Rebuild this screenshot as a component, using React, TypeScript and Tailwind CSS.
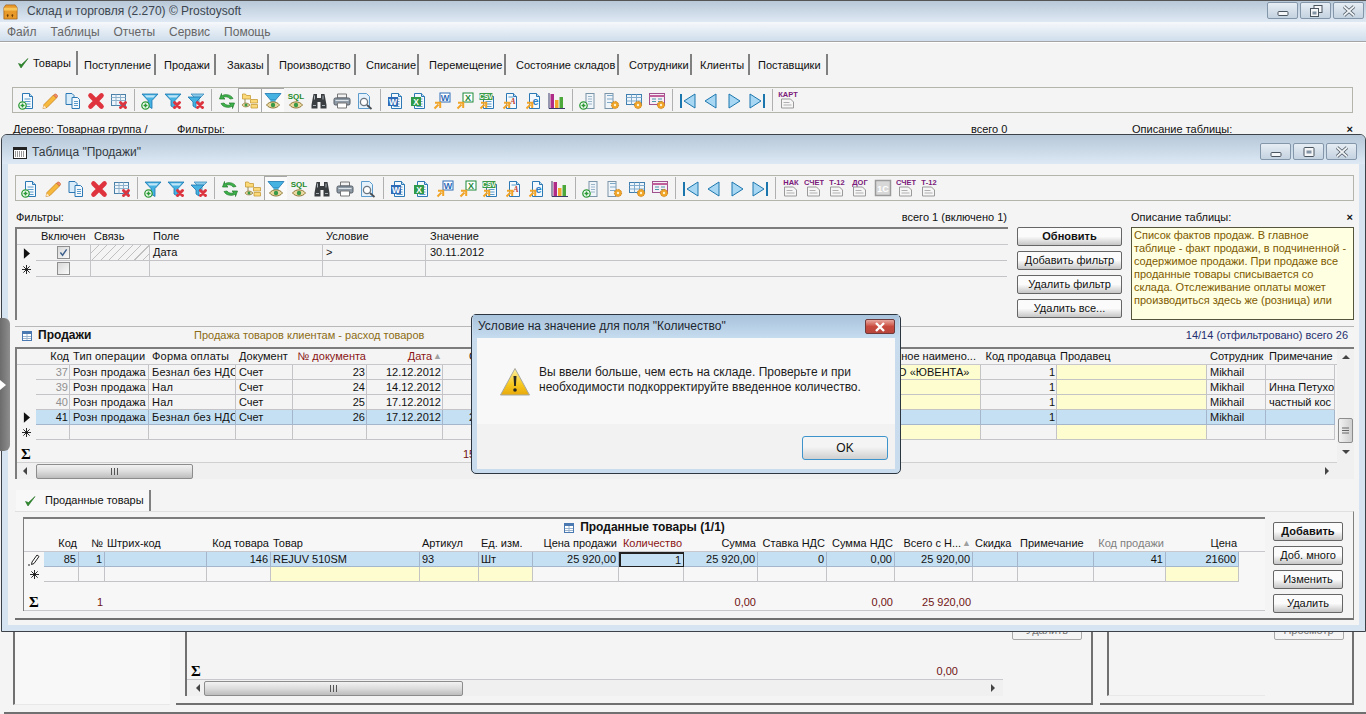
import React from 'react';

// ---- small icon pieces ----
const Ic = ({ children }: { children: React.ReactNode }) => (
	<svg viewBox="0 0 18 18" className="w-[18px] h-[18px]">
		{children}
	</svg>
);

const Doc = ({ lines = true }: { lines?: boolean }) => (
	<>
		<path d="M4.5 1.5h7l3 3v12h-10z" fill="#f4f9fd" stroke="#2c78b4" />
		<path d="M11.5 1.5v3h3" fill="#bcd9ef" stroke="#2c78b4" />
		{lines && <path d="M6.5 7h6M6.5 9.5h6M6.5 12h6M6.5 14.5h6" stroke="#5b9ccc" />}
	</>
);
const Plus = () => (
	<>
		<circle cx="4.5" cy="13.5" r="3.7" fill="#fff" stroke="#2b9a35" strokeWidth="1.3" />
		<path d="M4.5 11.5v4M2.5 13.5h4" stroke="#2b9a35" strokeWidth="1.6" />
	</>
);
const SmallX = () => (
	<path d="M10.5 10.5l5 5M15.5 10.5l-5 5" stroke="#dc3540" strokeWidth="3" strokeLinecap="round" />
);
const Arrow = () => (
	<path d="M1.5 16.5l4-4M2 10.8h5.2V16" fill="none" stroke="#f0a428" strokeWidth="2" />
);
const Gear = () => (
	<>
		<circle cx="13" cy="13" r="3.6" fill="#f0a428" stroke="#c97f12" strokeDasharray="1.4 1" />
		<circle cx="13" cy="13" r="1.2" fill="#fff3d0" />
	</>
);
const Eye = () => (
	<>
		<path d="M2.5 13c3-4.2 10-4.2 13 0-3 4-10 4-13 0z" fill="#ecd9a2" stroke="#8f7a3a" />
		<circle cx="9" cy="13" r="2.2" fill="#3a9a48" />
	</>
);
const Funnel = () => (
	<>
		<path d="M1 2h16l-6 6.5v8l-4-2.5V8.500z" fill="#45b2e2" stroke="#1c76ae" strokeWidth="0.8" />
		<path d="M3.500 3.200h11l-2 2.200h-7z" fill="#bfe5f7" />
	</>
);
const Funnel2 = () => (
	<>
		<path d="M4 2h13l-5 5v4H9V7z" fill="#8ccbea" stroke="#3f8fbd" strokeWidth="0.8" />
		<path d="M1 5h13l-5 5v6l-3-2v-4z" fill="#45b2e2" stroke="#1c76ae" strokeWidth="0.8" />
	</>
);
const WBox = ({ c, t }: { c: string; t: string }) => (
	<>
		<rect x="7" y="1" width="10" height="9" fill="#fff" stroke={c} />
		<text x="12" y="9" textAnchor="middle" fontSize="9" fontWeight="700" fontFamily="Liberation Sans, sans-serif" fill={c}>
			{t}
		</text>
	</>
);
const Bars = () => (
	<path d="M5 3.500h6M5 7h6M5 10.500h6" stroke="#7fa9c9" />
);

const icons: Record<string, React.ReactNode> = {
	newDoc: (<Ic><Doc /><Plus /></Ic>),
	pencil: (
		<Ic>
			<path d="M3 12.500L12.500 3l3 3L6 15.500l-4 1z" fill="#f6b93c" stroke="#c9801e" strokeWidth="0.8" />
			<path d="M12.500 3l3 3 1-1.500c.5-1-1.500-3-2.500-2.500z" fill="#f08a70" stroke="#c9601e" strokeWidth="0.6" />
			<path d="M2 16.500l.8-3.200 2.400 2.400z" fill="#ffe9c8" />
		</Ic>
	),
	copy: (
		<Ic>
			<path d="M2 1.500h6l2 2v9H2z" fill="#d9ecf9" stroke="#2c78b4" />
			<path d="M8 5.500h5.500l2 2v9H8z" fill="#f4f9fd" stroke="#2c78b4" />
			<path d="M10 9.500h4M10 11.500h4M10 13.500h4" stroke="#5b9ccc" />
		</Ic>
	),
	bigX: (
		<Ic>
			<path d="M3.500 3.500l11 11M14.500 3.500l-11 11" stroke="#df343e" strokeWidth="4.600" strokeLinecap="round" />
		</Ic>
	),
	tableX: (
		<Ic>
			<rect x="1.500" y="2.500" width="14" height="11" fill="#eef5fb" stroke="#4a7fa8" />
			<path d="M1.500 5.500h14M1.500 8.500h14M6 2.500v11M10.500 2.500v11" stroke="#8fb2cc" />
			<SmallX />
		</Ic>
	),
	filterPlus: (<Ic><Funnel /><Plus /></Ic>),
	filterX: (<Ic><Funnel /><SmallX /></Ic>),
	filterX2: (<Ic><Funnel2 /><SmallX /></Ic>),
	refresh: (
		<Ic>
			<path d="M15 6.500C13 2.500 7 1.500 3.500 4V1.500l-2 5.500h5.500L5 5.500c3-1.500 5.500-.5 7 1.500z" fill="#3db14a" stroke="#1f7d2b" strokeWidth="0.7" />
			<path d="M3 11.500c2 4 8 5 11.500 2.500v2.500l2-5.500H11l2 1.500c-3 1.500-5.500.5-7-1.500z" fill="#3db14a" stroke="#1f7d2b" strokeWidth="0.7" />
		</Ic>
	),
	tree: (
		<Ic>
			<path d="M1.500 2h3l1 1.500h4V7h-8zM9.500 7.500h7v3.500h-7zM10 12.500h6.500V16H10z" fill="#fbd978" stroke="#c79c38" strokeWidth="0.8" />
			<path d="M4 7v5.500h4" fill="none" stroke="#9a8a50" />
			<path d="M1 13c1.500-2.500 6-2.500 8 0-2 2.500-6.500 2.500-8 0z" fill="#ecd9a2" stroke="#8f7a3a" strokeWidth="0.8" />
			<circle cx="5" cy="13" r="1.500" fill="#3a9a48" />
		</Ic>
	),
	filterEye: (
		<Ic>
			<path d="M1 1.500h16l-5.500 6.500h-5z" fill="#45b2e2" stroke="#1c76ae" strokeWidth="0.8" />
			<path d="M6.500 8h5v3h-5z" fill="#45b2e2" />
			<Eye />
		</Ic>
	),
	sql: (
		<Ic>
			<text x="9" y="7" textAnchor="middle" fontSize="8" fontWeight="700" fontFamily="Liberation Sans, sans-serif" fill="#1e8a2a">
				SQL
			</text>
			<Eye />
		</Ic>
	),
	binoculars: (
		<Ic>
			<path d="M3.500 2h3.500v4h4V2h3.500l2 11v3.500H10.500V10h-3v6.500H1.500V13z" fill="#3a3d40" />
			<path d="M3 13.500h3M12 13.500h3M4.500 3.500v4M13 3.500v4" stroke="#a8b0b8" />
		</Ic>
	),
	printer: (
		<Ic>
			<path d="M4.500 2h9v4h-9z" fill="#f2f2f2" stroke="#777" />
			<rect x="1" y="6" width="16" height="7" rx="1.500" fill="#8e9aa6" stroke="#545c64" />
			<path d="M4.500 11h9v5h-9z" fill="#fff" stroke="#777" />
			<path d="M2.500 8.500h13" stroke="#dce4ea" />
		</Ic>
	),
	preview: (
		<Ic>
			<path d="M2.500 1.500h8l3 3v12h-11z" fill="#e6f2fb" stroke="#5b9ccc" />
			<circle cx="8" cy="10" r="3.600" fill="#fff" stroke="#6b7680" strokeWidth="1.300" />
			<path d="M11 13l4.500 4" stroke="#4a4f55" strokeWidth="1.800" />
		</Ic>
	),
	wordDoc: (<Ic><Doc /><rect x="1" y="5" width="10" height="9" fill="#2f6cb8" /><text x="6" y="12.500" textAnchor="middle" fontSize="8.500" fontWeight="700" fontFamily="Liberation Sans, sans-serif" fill="#fff">W</text></Ic>),
	excelDoc: (<Ic><Doc /><rect x="1" y="5" width="10" height="9" fill="#2e9a4a" /><text x="6" y="12.500" textAnchor="middle" fontSize="8.500" fontWeight="700" fontFamily="Liberation Sans, sans-serif" fill="#fff">X</text></Ic>),
	wordExp: (<Ic><WBox c="#2f6cb8" t="W" /><Arrow /></Ic>),
	excelExp: (<Ic><WBox c="#1f8a3a" t="X" /><Arrow /></Ic>),
	csv: (
		<Ic>
			<Doc />
			<rect x="0.500" y="1" width="13" height="7" fill="#3a9a48" />
			<text x="7" y="7" textAnchor="middle" fontSize="6.500" fontWeight="700" fontFamily="Liberation Sans, sans-serif" fill="#fff">CSV</text>
			<Arrow />
		</Ic>
	),
	rtf: (
		<Ic>
			<Doc lines={false} />
			<text x="11" y="12" textAnchor="middle" fontSize="8" fontStyle="italic" fontWeight="700" fontFamily="Liberation Serif, serif" fill="#c0392b">A</text>
			<path d="M6.500 5h5" stroke="#5b9ccc" />
			<Arrow />
		</Ic>
	),
	ie: (
		<Ic>
			<Doc lines={false} />
			<text x="10.500" y="13" textAnchor="middle" fontSize="11" fontWeight="700" fontFamily="Liberation Sans, sans-serif" fill="#2a80c8">e</text>
			<Arrow />
		</Ic>
	),
	chart: (
		<Ic>
			<path d="M1 1v15.500h16" fill="none" stroke="#3b3b6a" />
			<rect x="2.500" y="2" width="3.500" height="14" fill="#b02a88" />
			<rect x="7" y="8" width="3.500" height="8" fill="#f2a62a" />
			<rect x="11.500" y="5" width="3.500" height="11" fill="#4ca83a" />
		</Ic>
	),
	colAdd: (
		<Ic>
			<rect x="7" y="1.500" width="8" height="15" fill="#f0f5f9" stroke="#7a94a8" />
			<path d="M9 4.500h4M9 7h4M9 9.500h4M9 12h4" stroke="#9ab4c8" />
			<Plus />
		</Ic>
	),
	colGear: (
		<Ic>
			<rect x="3" y="1.500" width="8" height="15" fill="#f0f5f9" stroke="#7a94a8" />
			<Bars />
			<Gear />
		</Ic>
	),
	tableGear: (
		<Ic>
			<rect x="1.500" y="2.500" width="15" height="10" fill="#eef5fb" stroke="#3f7fb0" />
			<path d="M1.500 5.500h15M1.500 9h15M6.500 2.500v10M11.500 2.500v10" stroke="#7faacb" />
			<Gear />
		</Ic>
	),
	colsGear: (
		<Ic>
			<rect x="1.500" y="1.500" width="15" height="11" fill="#f6eef6" stroke="#a0508c" />
			<path d="M1.500 4h15" stroke="#c0609a" strokeWidth="2" />
			<path d="M4 7h4M4 9.500h4M10 7h4M10 9.500h4" stroke="#4a9aa8" />
			<Gear />
		</Ic>
	),
	first: (<Ic><path d="M2 2v14" stroke="#1c76ae" strokeWidth="2" /><path d="M16 2v14L5 9z" fill="#a7d7f2" stroke="#1c76ae" /></Ic>),
	prev: (<Ic><path d="M14 2v14L3 9z" fill="#a7d7f2" stroke="#1c76ae" /></Ic>),
	next: (<Ic><path d="M4 2v14l11-7z" fill="#a7d7f2" stroke="#1c76ae" /></Ic>),
	last: (<Ic><path d="M16 2v14" stroke="#1c76ae" strokeWidth="2" /><path d="M2 2v14l11-7z" fill="#a7d7f2" stroke="#1c76ae" /></Ic>),
	oneC: (
		<Ic>
			<rect x="1.500" y="1.500" width="15" height="15" fill="#d8d8d8" stroke="#9a9a9a" strokeWidth="1.500" />
			<text x="9" y="12.500" textAnchor="middle" fontSize="9" fontWeight="700" fontFamily="Liberation Sans, sans-serif" fill="#fff">1C</text>
		</Ic>
	),
};

const Report = ({ t }: { t: string }) => (
	<svg viewBox="0 0 20 20" className="w-[20px] h-[20px]">
		<text x="10" y="6.500" textAnchor="middle" fontSize="7.500" fontWeight="700" fontFamily="Liberation Sans, sans-serif" fill="#7a1a7a">
			{t}
		</text>
		<path d="M3.500 9h9l3 3v6h-12z" fill="#f6f6f6" stroke="#9a9a9a" />
		<path d="M5.500 12.500h6M5.500 15h8" stroke="#b0b0b0" />
	</svg>
);

const baseIcons: (string | null)[] = [
	'newDoc', 'pencil', 'copy', 'bigX', 'tableX', null,
	'filterPlus', 'filterX', 'filterX2', null,
	'refresh', 'tree', 'filterEye', 'sql', 'binoculars', 'printer', 'preview', null,
	'wordDoc', 'excelDoc', 'wordExp', 'excelExp', 'csv', 'rtf', 'ie', 'chart', null,
	'colAdd', 'colGear', 'tableGear', 'colsGear', null,
	'first', 'prev', 'next', 'last', null,
];

function Toolbar({ pressed, reports, className }: { pressed: string[]; reports: string[]; className: string }) {
	return (
		<div className={`flex items-center h-[26px] pl-[2px] border border-[#b4b4ac] ${className}`}>
			{baseIcons.map((name, i) =>
				name === null ? (
					<div key={i} className="w-[8px] h-[22px] flex justify-center shrink-0">
						<div className="w-px h-full bg-[#b0b0b0]" />
					</div>
				) : (
					<div
						key={i}
						className={`w-[23px] h-[24px] pt-[1px] flex items-center justify-center shrink-0 ${
							pressed.includes(name) ? 'border-t border-l border-[#a8a8a8] bg-[#fafafa]' : ''
						}`}
					>
						{icons[name]}
					</div>
				),
			)}
			{reports.map((r, i) => (
				<div key={i} className="w-[23px] h-[24px] flex items-center justify-center shrink-0">
					{r === '1C' ? icons.oneC : <Report t={r} />}
				</div>
			))}
		</div>
	);
}

// ---- window chrome ----
const WinBtn = ({ kind }: { kind: 'min' | 'restore' | 'max' | 'close' }) => (
	<div className="w-[31px] h-[17px] border border-[#8496aa] rounded-[2px] bg-gradient-to-b from-[#e6edf4] to-[#c4d2e0] flex items-center justify-center">
		<svg viewBox="0 0 16 12" className="w-[16px] h-[12px]">
			{kind === 'min' && <rect x="3" y="6.500" width="10" height="4" rx="1" fill="#f4f6f8" stroke="#4a5560" />}
			{kind === 'max' && (
				<>
					<rect x="3" y="1.500" width="10" height="9" rx="1" fill="#f4f6f8" stroke="#4a5560" />
					<rect x="5.500" y="4.500" width="5" height="3" fill="#8494a4" />
				</>
			)}
			{kind === 'restore' && (
				<>
					<rect x="6" y="0.500" width="8" height="7" fill="#f4f6f8" stroke="#4a5560" />
					<rect x="2.500" y="3.500" width="8" height="8" fill="#f4f6f8" stroke="#4a5560" />
					<rect x="4.500" y="6.500" width="4" height="3" fill="#8494a4" />
				</>
			)}
			{kind === 'close' && (
				<>
					<path d="M3 1.500l10 9M13 1.500l-10 9" stroke="#4a5560" strokeWidth="3.400" />
					<path d="M3 1.500l10 9M13 1.500l-10 9" stroke="#eef2f5" strokeWidth="1.800" />
				</>
			)}
		</svg>
	</div>
);

const Check = () => (
	<svg viewBox="0 0 12 12" className="w-[12px] h-[12px]">
		<path d="M1.500 6.500L4 11 11 1.500 4.500 7.500z" fill="#2f8a2f" stroke="#1f6f1f" strokeWidth="0.6" />
	</svg>
);

const TableIcon = () => (
	<svg viewBox="0 0 10 10" className="w-[10px] h-[10px]">
		<rect x="0.500" y="0.500" width="9" height="9" fill="#fff" stroke="#4a78b0" />
		<rect x="0.500" y="0.500" width="9" height="2.500" fill="#4a78b0" />
		<path d="M1 5.500h8M1 7.500h8M5 3v6" stroke="#9ab4d0" />
	</svg>
);

function Btn({ t, bold, className = '' }: { t: string; bold?: boolean; className?: string }) {
	return (
		<div
			className={`flex items-center justify-center h-[19px] border border-[#666] rounded-[2px] bg-gradient-to-b from-[#fbfbfb] from-50% to-[#c6c6c6] text-[#111] ${
				bold ? 'font-bold border-[#444]' : ''
			} ${className}`}
		>
			{t}
		</div>
	);
}

// ---- grids ----
const RowMark = ({ kind }: { kind: string }) => {
	if (kind === 'cur')
		return (
			<svg viewBox="0 0 8 12" className="w-[7px] h-[11px]">
				<path d="M1 0v12l7-6z" fill="#111" />
			</svg>
		);
	if (kind === 'new')
		return (
			<svg viewBox="0 0 10 10" className="w-[9px] h-[9px]">
				<path d="M5 0v10M0 5h10M1.500 1.500l7 7M8.500 1.500l-7 7" stroke="#111" strokeWidth="1" />
			</svg>
		);
	if (kind === 'edit')
		return (
			<svg viewBox="0 0 12 12" className="w-[12px] h-[12px]">
				<path d="M4 8l5-7 2 1.500-5 7-2.500 1z" fill="#fff" stroke="#222" />
				<path d="M0 11h2" stroke="#222" />
			</svg>
		);
	if (kind === 'sum') return <span className="font-['Liberation_Serif'] font-bold text-[15px] leading-none">Σ</span>;
	return null;
};

type Col = { w: string; t?: string; r?: boolean; hc?: string; y?: boolean; pl?: string; g?: boolean; sort?: boolean };
type Row = { mark?: string; sel?: boolean; cells: string[]; focus?: number };

function GridHead({ cols, ind, pad = 'px-[2px]' }: { cols: Col[]; ind: string; pad?: string }) {
	return (
		<div className="flex h-[16px] border-b border-[#c8c8cc] shrink-0">
			<div className={`${ind} shrink-0`} />
			{cols.map((c, i) => (
				<div key={i} className={`${c.w} shrink-0 flex items-center ${pad} whitespace-nowrap overflow-hidden ${c.r ? 'justify-end' : ''} ${c.pl ?? ''} ${c.hc ?? ''}`}>
					{c.t}
					{c.sort && <span className="text-[#a0a0a0] text-[9px] ml-[1px]">▲</span>}
				</div>
			))}
		</div>
	);
}

function GridRows({ cols, rows, ind, pad = 'px-[2px]' }: { cols: Col[]; rows: Row[]; ind: string; pad?: string }) {
	return (
		<>
			{rows.map((row, ri) => (
				<div key={ri} className="flex h-[15px] shrink-0">
					<div className={`${ind} shrink-0 flex items-center justify-center`}>
						{row.mark && <RowMark kind={row.mark} />}
					</div>
					{cols.map((c, i) => (
						<div
							key={i}
							className={`${c.w} shrink-0 flex items-center ${pad} whitespace-nowrap overflow-hidden border-b border-r ${c.r ? 'justify-end' : ''} ${c.pl ?? ''} ${
								row.focus === i
									? 'border-2 border-[#222] bg-[#c6e0f3]'
									: row.sel
										? 'bg-[#c6e0f3] border-[#a4b6cc]'
										: c.y
											? 'bg-[#fdfdd0] border-[#c4c4c4]'
											: 'border-[#c4c4c8]'
							} ${c.g && !row.sel ? 'text-[#909090]' : ''}`}
						>
							{row.cells[i]}
						</div>
					))}
				</div>
			))}
		</>
	);
}

const Grip = () => (
	<svg viewBox="0 0 9 7" className="w-[9px] h-[7px]">
		<path d="M1.500 0v7M4.500 0v7M7.500 0v7" stroke="#555" />
	</svg>
);
const ScrollArrow = ({ dir }: { dir: 'l' | 'r' | 'u' | 'd' }) => (
	<svg viewBox="0 0 8 8" className="w-[8px] h-[8px]">
		{dir === 'l' && <path d="M6 0v8L2 4z" fill="#444" />}
		{dir === 'r' && <path d="M2 0v8l4-4z" fill="#444" />}
		{dir === 'u' && <path d="M0 6h8L4 2z" fill="#444" />}
		{dir === 'd' && <path d="M0 2h8L4 6z" fill="#444" />}
	</svg>
);

const thumbH = 'flex items-center justify-center h-[15px] border border-[#8c8c8c] rounded-[2px] bg-gradient-to-b from-[#f2f2f2] via-[#dcdcdc] to-[#bdbdbd]';

function HScroll({ pad, thumb, lead, arrowRight }: { pad: string; thumb: string; lead: string; arrowRight: string }) {
	return (
		<div className={`flex items-center h-[16px] shrink-0 bg-[#f0f0f0] ${pad}`}>
			<div className={`${lead} flex justify-center shrink-0`}>
				<ScrollArrow dir="l" />
			</div>
			<div className={`${thumb} ${thumbH} shrink-0`}>
				<Grip />
			</div>
			<div className="flex-1" />
			<div className={`${arrowRight} flex justify-center shrink-0`}>
				<ScrollArrow dir="r" />
			</div>
		</div>
	);
}

// ---- data ----
const filterCols: Col[] = [
	{ w: 'w-[55px]', t: 'Включен', pl: 'pl-[5px]' },
	{ w: 'w-[59px]', t: 'Связь', pl: 'pl-[3px]' },
	{ w: 'w-[173px]', t: 'Поле', pl: 'pl-[3px]' },
	{ w: 'w-[103px]', t: 'Условие', pl: 'pl-[3px]' },
	{ w: 'w-[581px]', t: 'Значение', pl: 'pl-[4px]' },
];

const CheckBox = ({ on }: { on?: boolean }) => (
	<div className="w-[13px] h-[13px] border border-[#8e8f8f] bg-gradient-to-br from-[#d8d8d8] to-[#fafafa] flex items-center justify-center">
		{on && (
			<svg viewBox="0 0 10 10" className="w-[9px] h-[9px]">
				<path d="M1.500 5l2.500 3 4.500-6.500" fill="none" stroke="#3c5f8c" strokeWidth="1.600" />
			</svg>
		)}
	</div>
);

const salesCols: Col[] = [
	{ w: 'w-[34px]', t: 'Код', r: true, g: true },
	{ w: 'w-[79px]', t: 'Тип операции', pl: 'tracking-[0.15px]' },
	{ w: 'w-[87px]', t: 'Форма оплаты', pl: 'tracking-[0.2px]' },
	{ w: 'w-[57px]', t: 'Документ' },
	{ w: 'w-[74px]', t: '№ документа', r: true, hc: 'text-[#8a1414]' },
	{ w: 'w-[76px]', t: 'Дата', r: true, hc: 'text-[#8a1414]', sort: true },
	{ w: 'w-[157px]', t: 'Сумма', pl: 'pl-[26px]' },
	{ w: 'w-[278px]', t: 'Клиент' },
	{ w: 'w-[103px]', t: 'Полное наимено...', y: true },
	{ w: 'w-[76px]', t: 'Код продавца', r: true },
	{ w: 'w-[150px]', t: 'Продавец', y: true },
	{ w: 'w-[59px]', t: 'Сотрудник' },
	{ w: 'w-[69px]', t: 'Примечание' },
];

const salesRows: Row[] = [
	{ cells: ['37', 'Розн продажа', 'Безнал без НДС', 'Счет', '23', '12.12.2012', '', '', 'ООО «ЮВЕНТА»', '1', '', 'Mikhail', ''] },
	{ cells: ['39', 'Розн продажа', 'Нал', 'Счет', '24', '14.12.2012', '', '', '', '1', '', 'Mikhail', 'Инна Петухо'] },
	{ cells: ['40', 'Розн продажа', 'Нал', 'Счет', '25', '17.12.2012', '', '', '', '1', '', 'Mikhail', 'частный кос'] },
	{ mark: 'cur', sel: true, cells: ['41', 'Розн продажа', 'Безнал без НДС', 'Счет', '26', '17.12.2012', '25 920,00', '', '', '1', '', 'Mikhail', ''] },
	{ mark: 'new', cells: ['', '', '', '', '', '', '', '', '', '', '', '', ''] },
];

const soldCols: Col[] = [
	{ w: 'w-[35px]', t: 'Код', r: true },
	{ w: 'w-[26px]', t: '№', r: true },
	{ w: 'w-[102px]', t: 'Штрих-код' },
	{ w: 'w-[64px]', t: 'Код товара', r: true },
	{ w: 'w-[149px]', t: 'Товар', y: true },
	{ w: 'w-[59px]', t: 'Артикул', y: true },
	{ w: 'w-[54px]', t: 'Ед. изм.', y: true },
	{ w: 'w-[86px]', t: 'Цена продажи', r: true },
	{ w: 'w-[65px]', t: 'Количество', hc: 'text-[#8a1414]', r: true },
	{ w: 'w-[74px]', t: 'Сумма', r: true },
	{ w: 'w-[69px]', t: 'Ставка НДС', r: true },
	{ w: 'w-[68px]', t: 'Сумма НДС', r: true },
	{ w: 'w-[78px]', t: 'Всего с Н...', r: true, sort: true },
	{ w: 'w-[45px]', t: 'Скидка' },
	{ w: 'w-[76px]', t: 'Примечание' },
	{ w: 'w-[72px]', t: 'Код продажи', r: true, hc: 'text-[#808080]' },
	{ w: 'w-[73px]', t: 'Цена', r: true, y: true },
];

const soldRows: Row[] = [
	{
		mark: 'edit',
		sel: true,
		focus: 8,
		cells: ['85', '1', '', '146', 'REJUV 510SM', '93', 'Шт', '25 920,00', '1', '25 920,00', '0', '0,00', '25 920,00', '', '', '41', '21600'],
	},
	{ mark: 'new', cells: Array(17).fill('') },
];

const soldSums = ['', '1', '', '', '', '', '', '', '', '0,00', '', '0,00', '25 920,00', '', '', '', ''];

// ---- windows ----
function SalesWindow() {
	return (
		<div className="absolute left-[1px] top-[134px] w-[1365px] h-[498px] flex flex-col border border-[#3c4248] rounded-t-[6px] bg-[#d6e4f2]">
			<div className="flex h-[29px] shrink-0 rounded-t-[5px] bg-gradient-to-b from-[#b6c7d8] via-[#c9d8e6] to-[#dde9f5] pl-[11px] pr-[8px]">
				<div className="flex items-center gap-[5px] flex-1 text-[12px] text-[#333a42] pt-[6px]">
					<svg viewBox="0 0 14 12" className="w-[14px] h-[12px]">
						<rect x="0.500" y="0.500" width="13" height="11" fill="#fff" stroke="#222" />
						<rect x="0.500" y="0.500" width="13" height="2.500" fill="#222" />
						<path d="M2 5h10M2 7h10M2 9h10" stroke="#333" strokeDasharray="1 1" />
					</svg>
					Таблица "Продажи"
				</div>
				<div className="flex gap-[2px] pt-[8px]">
					<WinBtn kind="min" />
					<WinBtn kind="max" />
					<WinBtn kind="close" />
				</div>
			</div>

			<div className="flex flex-col flex-1 mx-[6px] bg-[#f4f4f4] pl-[7px] pr-[5px]">
				<Toolbar className="mt-[11px]" pressed={['filterEye']} reports={['НАК', 'СЧЕТ', 'Т-12', 'ДОГ', '1C', 'СЧЕТ', 'Т-12']} />

				<div className="flex items-center h-[15px] mt-[9px] shrink-0">
					<div className="w-[992px] flex justify-between pl-[1px]">
						<span>Фильтры:</span>
						<span>всего 1 (включено 1)</span>
					</div>
					<div className="flex-1 flex justify-between pl-[124px] pr-[1px]">
						<span>Описание таблицы:</span>
						<span className="font-bold">×</span>
					</div>
				</div>

				<div className="flex h-[93px] mt-[2px] shrink-0">
					<div className="w-[993px] border-t-2 border-l-2 border-[#7c7c7c] shrink-0 overflow-hidden">
						<GridHead cols={filterCols} ind="w-[19px]" />
						{[0, 1].map((i) => (
							<div key={i} className="flex h-[16px]">
								<div className="w-[19px] flex items-center justify-center shrink-0">
									<RowMark kind={i === 0 ? 'cur' : 'new'} />
								</div>
								<div className="w-[55px] flex items-center justify-center border-b border-r border-[#c4c4c8] shrink-0">
									<CheckBox on={i === 0} />
								</div>
								<div className={`w-[59px] border-b border-r border-[#c4c4c8] shrink-0 ${i === 0 ? 'bg-[repeating-linear-gradient(135deg,#f4f4f4_0,#f4f4f4_5px,#c0c0c0_5px,#c0c0c0_6px)]' : ''}`} />
								<div className="w-[173px] flex items-center px-[3px] border-b border-r border-[#c4c4c8] shrink-0">{i === 0 ? 'Дата' : ''}</div>
								<div className="w-[103px] flex items-center px-[3px] border-b border-r border-[#c4c4c8] shrink-0">{i === 0 ? '>' : ''}</div>
								<div className="w-[581px] flex items-center px-[4px] border-b border-[#c4c4c8] shrink-0">{i === 0 ? '30.11.2012' : ''}</div>
							</div>
						))}
					</div>
					<div className="w-[105px] ml-[9px] flex flex-col gap-[5px] shrink-0">
						<Btn t="Обновить" bold />
						<Btn t="Добавить фильтр" />
						<Btn t="Удалить фильтр" />
						<Btn t="Удалить все..." />
					</div>
					<div className="flex-1 ml-[9px] border border-[#55553c] bg-[#ffffe1] text-[#7d5a00] px-[2px] pt-[1px] leading-[13px] overflow-hidden">
						Список фактов продаж. В главное таблице - факт продажи, в подчиненной - содержимое продажи. При продаже все проданные товары списывается со склада. Отслеживание оплаты может производиться здесь же (розница) или
					</div>
				</div>

				<div className="flex items-center h-[18px] mt-[6px] border-t border-[#b8b8b8] shrink-0 pl-[7px] pr-[6px]">
					<TableIcon />
					<span className="font-bold ml-[6px] text-[12px] text-[#111] w-[156px]">Продажи</span>
					<span className="text-[#8c6c14]">Продажа товаров клиентам - расход товаров</span>
					<span className="ml-auto text-[#1f2f6f]">14/14 (отфильтровано) всего 26</span>
				</div>

				<div className="flex flex-col h-[132px] mt-[3px] border-t-2 border-l-2 border-[#7c7c7c] shrink-0">
					<div className="flex flex-1 min-h-0">
						<div className="flex-1 min-w-0 overflow-hidden flex flex-col">
							<GridHead cols={salesCols} ind="w-[19px]" pad="pl-[3px] pr-[1px]" />
							<GridRows cols={salesCols} rows={salesRows} ind="w-[19px]" pad="pl-[3px] pr-[1px]" />
							<div className="flex items-center h-[17px] mt-[7px] border-b border-[#d0d0d0] pl-[4px] text-[#701414]">
								<div className="w-[16px] shrink-0 text-black">
									<RowMark kind="sum" />
								</div>
								<span className="ml-[426px]">154 320,00</span>
							</div>
						</div>
						<div className="w-[17px] shrink-0 flex flex-col items-center bg-[#f0f0f0] pt-[4px]">
							<ScrollArrow dir="u" />
							<div className="mt-[57px] w-[15px] h-[25px] border border-[#8c8c8c] rounded-[2px] bg-gradient-to-r from-[#f2f2f2] to-[#cfcfcf] flex items-center justify-center">
								<svg viewBox="0 0 7 7" className="w-[7px] h-[7px]">
									<path d="M0 1h7M0 3.500h7M0 6h7" stroke="#666" />
								</svg>
							</div>
							<div className="mt-[5px]">
								<ScrollArrow dir="d" />
							</div>
						</div>
					</div>
					<HScroll pad="pl-[2px] pr-[22px]" lead="w-[17px] pr-[6px]" thumb="w-[157px]" arrowRight="w-[10px]" />
				</div>

				<div className="flex h-[21px] mt-[11px] shrink-0 pl-[1px]">
					<div className="flex items-center w-[135px] border-r-2 border-[#808080] pl-[8px] gap-[9px] bg-[#f8f8f8]">
						<Check />
						<span>Проданные товары</span>
					</div>
				</div>

				<div className="flex h-[109px] border-t border-r border-b-2 border-r-[#808080] border-t-[#e0e0e0] border-b-[#707070] shrink-0 pl-[8px]">
					<div className="w-[1242px] h-[94px] mt-[5px] border-t-2 border-l border-[#7c7c7c] flex flex-col shrink-0 bg-[#f7f7f7] overflow-hidden">
						<div className="flex items-center justify-center gap-[6px] h-[17px] font-bold text-[12px] shrink-0">
							<TableIcon />
							Проданные товары (1/1)
						</div>
						<GridHead cols={soldCols} ind="w-[20px]" />
						<GridRows cols={soldCols} rows={soldRows} ind="w-[20px]" />
						<div className="flex h-[17px] mt-[12px] border-b border-[#c8c8cc] text-[#701414]">
							<div className="w-[20px] shrink-0 flex items-center justify-center text-black">
								<RowMark kind="sum" />
							</div>
							{soldCols.map((c, i) => (
								<div key={i} className={`${c.w} shrink-0 flex items-center justify-end px-[2px]`}>
									{soldSums[i]}
								</div>
							))}
						</div>
					</div>
					<div className="w-[70px] ml-[8px] pt-[10px] flex flex-col gap-[5px] overflow-hidden shrink-0">
						<Btn t="Добавить" bold />
						<Btn t="Доб. много" />
						<Btn t="Изменить" />
						<Btn t="Удалить" />
					</div>
				</div>
			</div>
			<div className="h-[6px] shrink-0" />
		</div>
	);
}

function WarningDialog() {
	return (
		<div className="absolute left-[471px] top-[314px] w-[430px] h-[160px] flex flex-col border border-[#2c3640] rounded-[5px] bg-[#c8dcee] px-[1px] font-['Liberation_Sans',sans-serif] text-[12px]">
			<div className="flex items-center h-[23px] shrink-0 pl-[5px] pr-[4px] bg-gradient-to-b from-[#a9c3dc] to-[#c6dcef] text-[#1c2630]">
				<span className="flex-1">Условие на значение для поля "Количество"</span>
				<div className="w-[30px] h-[15px] rounded-[2px] border border-[#6e3a3a] bg-gradient-to-b from-[#e8a8a0] via-[#c84a3e] to-[#b8463c] flex items-center justify-center">
					<svg viewBox="0 0 12 10" className="w-[12px] h-[10px]">
						<path d="M2 1l8 8M10 1l-8 8" stroke="#fff" strokeWidth="2.400" />
					</svg>
				</div>
			</div>
			<div className="flex flex-col flex-1 mx-[4px] mb-[4px] bg-[#f7f7f7]">
				<div className="flex h-[86px] shrink-0 pl-[22px] pt-[29px] bg-[#f8f8f8]">
					<svg viewBox="0 0 32 30" className="w-[32px] h-[30px] shrink-0">
						<defs>
							<linearGradient id="warn" x1="0" y1="0" x2="0" y2="1">
								<stop offset="0" stopColor="#fdf0a0" />
								<stop offset="0.6" stopColor="#f7c81e" />
								<stop offset="1" stopColor="#e8a90c" />
							</linearGradient>
						</defs>
						<path d="M16 1.500L30.500 28H1.500z" fill="url(#warn)" stroke="#a8a8a0" strokeLinejoin="round" />
						<path d="M14.500 9h3l-.6 10h-1.800z" fill="#2a2a20" />
						<circle cx="16" cy="23" r="1.800" fill="#2a2a20" />
					</svg>
					<div className="ml-[8px] -mt-[2px] leading-[15px] text-[#1c1c1c] w-[340px]">
						Вы ввели больше, чем есть на складе. Проверьте и при необходимости подкорректируйте введенное количество.
					</div>
				</div>
				<div className="flex flex-1 justify-end items-start pt-[12px] pr-[7px] bg-[#f2f2f2]">
					<div className="w-[86px] h-[24px] border border-[#3d94cc] rounded-[3px] bg-gradient-to-b from-[#f4f4f4] from-45% to-[#cfcfcf] flex items-center justify-center text-[#111]">
						OK
					</div>
				</div>
			</div>
		</div>
	);
}

const tabs = [
	['w-[78px] pl-[6px]', 'Поступление'],
	['w-[60px] pl-[8px]', 'Продажи'],
	['w-[53px] pl-[11px]', 'Заказы'],
	['w-[87px] pl-[10px]', 'Производство'],
	['w-[63px] pl-[10px]', 'Списание'],
	['w-[87px] pl-[10px]', 'Перемещение'],
	['w-[113px] pl-[10px]', 'Состояние складов'],
	['w-[73px] pl-[10px]', 'Сотрудники'],
	['w-[58px] pl-[8px]', 'Клиенты'],
	['w-[78px] pl-[8px]', 'Поставщики'],
];

const underBtn = 'w-[70px] h-[19px] border border-[#a8a8a8] rounded-[2px] shrink-0 text-[#777] flex items-center justify-center';

export default function App() {
	return (
		<div className="relative w-[1366px] h-[714px] overflow-hidden bg-[#f4f4f4] font-['Liberation_Sans',sans-serif] text-[11px] leading-[13px] text-[#111]">
			{/* main window title */}
			<div className="flex items-center h-[22px] border-t border-[#555] bg-gradient-to-b from-[#b8c8d8] to-[#dfe9f4] pl-[2px] pr-[2px]">
				<svg viewBox="0 0 18 18" className="w-[17px] h-[17px]">
					<path d="M2 5l2-3h10l2 3v12H2z" fill="#e89a2a" stroke="#9a5a14" strokeWidth="0.700" />
					<path d="M2 5h14v3H2z" fill="#f7c65a" />
					<path d="M6 12v3M5 13h2M11 12v3M10 13h2" stroke="#6a3a0a" />
				</svg>
				<span className="ml-[8px] flex-1 text-[12px] text-[#3c4650]">Склад и торговля (2.270) © Prostoysoft</span>
				<div className="flex gap-[2px] pb-[2px]">
					<WinBtn kind="min" />
					<WinBtn kind="restore" />
					<WinBtn kind="close" />
				</div>
			</div>
			<div className="flex items-center gap-[14px] h-[19px] pl-[7px] pt-[1px] text-[#666] bg-gradient-to-b from-[#f6f8fb] to-[#cfdeec] text-[12px]">
				<span>Файл</span>
				<span>Таблицы</span>
				<span>Отчеты</span>
				<span>Сервис</span>
				<span>Помощь</span>
			</div>
			<div className="h-[2px] border-t border-[#a4a4a4] bg-white" />

			{/* tabs */}
			<div className="flex h-[23px] mt-[9px] pl-[10px] text-[#111]">
				<div className="w-[68px] flex items-center gap-[4px] pl-[7px] border-r-2 border-[#808080] -mt-[1px]">
					<Check />
					<span>Товары</span>
				</div>
				{tabs.map(([w, t]) => (
					<div key={t} className={`${w} flex items-center border-r-2 border-[#808080] mt-[2px] pt-[1px] whitespace-nowrap`}>
						{t}
					</div>
				))}
			</div>
			<div className="flex flex-col pl-[12px] pr-[13px]">
				<Toolbar className="mt-[12px]" pressed={['tree', 'filterEye']} reports={['КАРТ']} />
			</div>
			<div className="flex h-[13px] mt-[9px] pt-[1px] pl-[13px] pr-[13px]">
				<span className="w-[164px]">Дерево: Товарная группа /</span>
				<span className="w-[794px]">Фильтры:</span>
				<span className="w-[161px]">всего 0</span>
				<span className="flex-1">Описание таблицы:</span>
				<span className="font-bold">×</span>
			</div>

			{/* panels left under the sales window */}
			<div className="flex h-[570px] pl-[13px]">
				<div className="w-[157px] border-l-2 border-b border-l-[#707070] border-b-[#e8e8e8] bg-[#f8f8f8] shrink-0" />
				<div className="w-[917px] ml-[6px] flex border-r-2 border-b-2 border-[#707070] pl-[9px] shrink-0">
					<div className="w-[818px] h-[561px] flex flex-col justify-end border-l-2 border-[#707070] shrink-0">
						<div className="flex items-center h-[17px] border-b border-[#c8c8cc] shrink-0 text-[#701414]">
							<div className="w-[18px] flex justify-center text-black">
								<RowMark kind="sum" />
							</div>
							<span className="ml-auto pr-[45px]">0,00</span>
						</div>
						<HScroll pad="pl-[4px] pr-[5px]" lead="w-[13px]" thumb="w-[259px]" arrowRight="w-[10px]" />
					</div>
					<div className="flex-1 flex justify-center items-start pt-[486px]">
						<div className={underBtn}>Удалить</div>
					</div>
				</div>
				<div className="w-[254px] ml-[7px] flex border-r-2 border-b-2 border-[#707070] pl-[7px] shrink-0">
					<div className="w-[158px] h-[561px] border-l-2 border-b border-l-[#707070] border-b-[#e8e8e8] shrink-0" />
					<div className="flex-1 flex justify-center items-start pt-[486px]">
						<div className={underBtn}>Просмотр</div>
					</div>
				</div>
			</div>
			<div className="h-[7px]" />
			<div className="ml-[4px] border-t-2 border-[#707070]" />

			<SalesWindow />

			{/* splitter knob */}
			<div className="absolute left-0 top-[318px] w-[10px] h-[133px] rounded-r-[6px] bg-gradient-to-r from-[#6c6c6c] to-[#8e8e8e] flex items-center">
				<svg viewBox="0 0 6 10" className="w-[6px] h-[10px]">
					<path d="M0 0v10l6-5z" fill="#fff" />
				</svg>
			</div>

			<WarningDialog />
		</div>
	);
}
